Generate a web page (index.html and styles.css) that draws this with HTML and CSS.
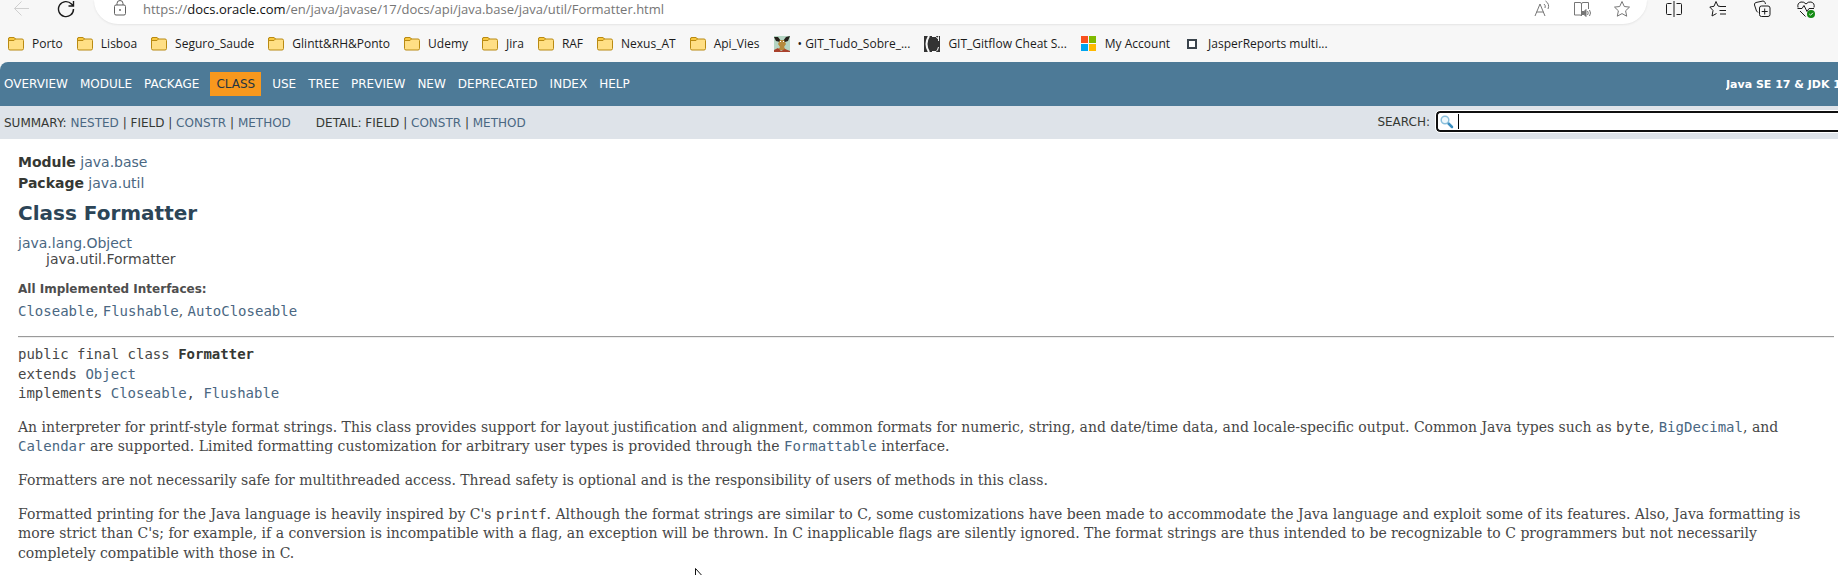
FILE: index.html
```html
<!DOCTYPE html>
<html lang="en">
<head>
<meta charset="utf-8">
<title>Formatter (Java SE 17 &amp; JDK 17)</title>
<link rel="stylesheet" href="styles.css">
</head>
<body>
<svg class="defs" aria-hidden="true">
  <symbol id="folder" viewBox="0 0 16 16">
    <path d="M.5 12.5V3q0-1.500 1.500-1.500h4L7.500 3H14q1.500 0 1.500 1.500v8q0 1.500-1.500 1.500H2q-1.500 0-1.500-1.500z" fill="#ffdf85" stroke="#b98a12"/>
    <path d="M.5 4.500V3q0-1.500 1.500-1.500h4L7.500 3 6 4.500z" fill="#f8c840" stroke="#b98a12"/>
  </symbol>
</svg>
<header class="browser">
  <div class="toolbar">
    <button class="tool back" aria-label="Back"><svg viewBox="0 0 18 18"><path d="M16 8.500H1.500M8.500 1.500l-7 7 7 7"/></svg></button>
    <button class="tool reload" aria-label="Refresh"><svg viewBox="0 0 18 18"><path d="M16.500 9A7.500 7.500 0 1 1 14.500 4L16 5.500M16.500 1v5h-5"/></svg></button>
    <div class="address">
      <svg class="lock" viewBox="0 0 14 16"><rect x="1.500" y="5" width="11" height="10" rx="1.500"/><path d="M4 5V3.500a3 3 0 0 1 6 0V5"/><circle cx="7" cy="10" r=".6"/></svg>
      <span class="url">https://<b>docs.oracle.com</b>/en/java/javase/17/docs/api/java.base/java/util/Formatter.html</span>
      <span class="page-tools">
        <button class="tool" aria-label="Read aloud"><svg viewBox="0 0 18 18"><path d="M2 16 7 4l5 12M3.500 12h7M11 4q2 1.500 1 4M12.500 1q4.500 3 2.500 8"/></svg></button>
        <button class="tool" aria-label="Immersive reader"><svg viewBox="0 0 18 18"><path d="M8.500 16V4Q8.500 2.500 7 2.500H1.500V15H7q1.500 0 1.500 1M8.500 4q0-1.500 1.500-1.500h5.500V9M14.500 11q1.500 2 0 4M16.500 10q2 3 0 6"/><path class="solid" d="M9 11.500h2l2-2v7l-2-2H9z"/></svg></button>
        <button class="tool" aria-label="Favorite"><svg viewBox="0 0 18 18"><path d="m9 1.500 2.300 5 5.200.6-3.900 3.700 1.100 5.400L9 13.600l-4.700 2.600 1.100-5.400L1.500 7.100l5.200-.6z"/></svg></button>
      </span>
    </div>
    <div class="side-tools">
      <button class="tool" aria-label="Split screen"><svg viewBox="0 0 18 18"><path d="M6.500 3.500h-4q-1 0-1 1v9q0 1 1 1h4M11.500 3.500h4q1 0 1 1v9q0 1-1 1h-4M9 1v16"/></svg></button>
      <button class="tool" aria-label="Favorites"><svg viewBox="0 0 18 18"><path d="M11.500 6.500 9 6 7 1.500 5 6.300.8 7l3.200 3.500-1 5.500 4.500-2.500M11 6.500h6M10.500 10.500H17M11 14h6"/></svg></button>
      <button class="tool" aria-label="Collections"><svg viewBox="0 0 18 18"><rect x="6.500" y="6" width="10.500" height="10.500" rx="2"/><path d="M11.700 8.500v6M8.700 11.500h6M5 12.500 3.500 11 1.500 5Q1 3 3 2.500l7-1.500q1.500 0 2 1.500l.5 1.500"/></svg></button>
      <button class="tool" aria-label="Browser essentials"><svg viewBox="0 0 18 18"><path d="M1 7.500Q0 3 4 2q3-.5 5 2 2-2.500 5-2 4 1 3 5.500M.5 8.500H5l2-3 3 6 2-3h5M3 11l5.500 5.500"/><circle cx="14" cy="14" r="4" fill="#138a13" stroke="none"/><path d="m12.300 14 1.200 1.200 2.400-2.400" stroke="#fff"/></svg></button>
    </div>
  </div>
  <nav class="bookmarks" aria-label="Bookmarks">
    <a href="#"><svg><use href="#folder"/></svg>Porto</a>
    <a href="#"><svg><use href="#folder"/></svg>Lisboa</a>
    <a href="#"><svg><use href="#folder"/></svg>Seguro_Saude</a>
    <a href="#"><svg><use href="#folder"/></svg>Glintt&amp;RH&amp;Ponto</a>
    <a href="#"><svg><use href="#folder"/></svg>Udemy</a>
    <a href="#"><svg><use href="#folder"/></svg>Jira</a>
    <a href="#"><svg><use href="#folder"/></svg>RAF</a>
    <a href="#"><svg><use href="#folder"/></svg>Nexus_AT</a>
    <a href="#"><svg><use href="#folder"/></svg>Api_Vies</a>
    <a href="#"><svg viewBox="0 0 16 16"><path fill="#b5d5c3" d="M0 0h16v16H0z"/><path fill="#26201a" d="m0 1 4 0 3 4h2l3-4 4-1-2 5-3 1H6L2 5z"/><path fill="#b68a3c" d="M6 4h4l2 4-2 3 2 3H4l2-3-2-3z"/><path fill="#a9412c" d="M0 14l4-2 3 3 4-2 5 2v1H0z"/><path fill="#fff" d="M6 5h1v1H6zM9 5h1v1H9z"/></svg>• GIT_Tudo_Sobre_...</a>
    <a href="#"><svg viewBox="0 0 16 16"><path fill="#333" d="M0 0h16v16H0z"/><path fill="none" stroke="#f7f7f7" stroke-width="2" d="M5 0Q0 8 5 16"/><path fill="none" stroke="#f7f7f7" d="M8 .5h4l1.500 2 1-2V5M14.500 11l-1 3-1.500 1.500H8"/></svg>GIT_Gitflow Cheat S...</a>
    <a href="#"><svg viewBox="0 0 16 16"><path fill="#f8501e" d="M0 0h7v7H0z"/><path fill="#7fba00" d="M8 0h7v7H8z"/><path fill="#00a4ef" d="M0 8h7v7H0z"/><path fill="#ffb900" d="M8 8h7v7H8z"/></svg>My Account</a>
    <a href="#"><svg viewBox="0 0 16 16"><path fill="#fff" stroke="#3b444c" stroke-width="2" d="M4 4h8v8H4z"/></svg>JasperReports multi...</a>
  </nav>
</header>
<div class="page">
  <nav class="top-nav" aria-label="Documentation">
    <ul>
      <li><a href="#">OVERVIEW</a></li>
      <li><a href="#">MODULE</a></li>
      <li><a href="#">PACKAGE</a></li>
      <li class="current">CLASS</li>
      <li><a href="#">USE</a></li>
      <li><a href="#">TREE</a></li>
      <li><a href="#">PREVIEW</a></li>
      <li><a href="#">NEW</a></li>
      <li><a href="#">DEPRECATED</a></li>
      <li><a href="#">INDEX</a></li>
      <li><a href="#">HELP</a></li>
    </ul>
    <div class="version">Java SE 17 &amp; JDK 17</div>
  </nav>
  <div class="sub-nav">
    <div class="members">
      <span>SUMMARY: <a href="#">NESTED</a> | FIELD | <a href="#">CONSTR</a> | <a href="#">METHOD</a></span>
      <span>DETAIL: FIELD | <a href="#">CONSTR</a> | <a href="#">METHOD</a></span>
    </div>
    <div class="search">
      <label for="search">SEARCH:</label>
      <div class="search-box">
        <input id="search" type="text">
        <svg viewBox="0 0 14 14"><path d="m7.500 7.500 4.500 4.500" stroke="#3a8ec0" stroke-width="2.500" stroke-linecap="round"/><circle cx="5" cy="5" r="3.800" fill="#eef8fc" stroke="#8abfdc" stroke-width="1.500"/></svg>
        <span class="caret"></span>
      </div>
    </div>
  </div>
  <main>
    <div class="owner"><b>Module</b> <a href="#">java.base</a></div>
    <div class="owner"><b>Package</b> <a href="#">java.util</a></div>
    <h1>Class Formatter</h1>
    <div class="inheritance"><a href="#">java.lang.Object</a>
      <div>java.util.Formatter</div>
    </div>
    <dl>
      <dt>All Implemented Interfaces:</dt>
      <dd><a href="#"><code>Closeable</code></a>, <a href="#"><code>Flushable</code></a>, <a href="#"><code>AutoCloseable</code></a></dd>
    </dl>
    <hr>
    <div class="signature">public final class <b>Formatter</b><br>extends <a href="#">Object</a><br>implements <a href="#">Closeable</a>, <a href="#">Flushable</a></div>
    <div class="description">
      <p>An interpreter for printf-style format strings. This class provides support for layout justification and alignment, common formats for numeric, string, and date/time data, and locale-specific output. Common Java types such as <code>byte</code>, <a href="#"><code>BigDecimal</code></a>, and <a href="#"><code>Calendar</code></a> are supported. Limited formatting customization for arbitrary user types is provided through the <a href="#"><code>Formattable</code></a> interface.</p>
      <p>Formatters are not necessarily safe for multithreaded access. Thread safety is optional and is the responsibility of users of methods in this class.</p>
      <p>Formatted printing for the Java language is heavily inspired by C's <code>printf</code>. Although the format strings are similar to C, some customizations have been made to accommodate the Java language and exploit some of its features. Also, Java formatting is more strict than C's; for example, if a conversion is incompatible with a flag, an exception will be thrown. In C inapplicable flags are silently ignored. The format strings are thus intended to be recognizable to C programmers but not necessarily completely compatible with those in C.</p>
    </div>
  </main>
</div>
<svg class="pointer" viewBox="0 0 12 18" aria-hidden="true"><path d="M.5.5v15l4-4h6z" fill="#fff" stroke="#111"/></svg>
</body>
</html>
```

FILE: styles.css
```css
* { box-sizing: border-box; }

body {
  display: flex;
  flex-direction: column;
  margin: 0;
  height: 100vh;
  overflow: hidden;
  position: relative;
  background: #f7f7f7;
  color: #353833;
  font: 14px "DejaVu Sans", sans-serif;
}

a { color: #4a6782; text-decoration: none; }
code, .signature { font-family: "DejaVu Sans Mono", monospace; font-size: 14px; }
.defs { position: absolute; width: 0; height: 0; }

/* Browser chrome */
.browser { flex: none; font-family: "Open Sans", sans-serif; }
.toolbar { display: flex; height: 24px; }
.tool {
  flex: none;
  width: 18px;
  height: 18px;
  padding: 0;
  border: 0;
  background: none;
  color: #1b1b1b;
}
.tool svg { display: block; width: 18px; height: 18px; fill: none; stroke: currentColor; }
.tool .solid { fill: currentColor; }
.back { margin-left: 13px; color: #cfcfcf; }
.reload { margin-left: 26px; }
.reload svg { stroke-width: 1.4; }
.address {
  flex: 1;
  display: flex;
  margin-left: 19px;
  padding: 0 16px 0 19px;
  background: #fff;
  border-radius: 0 0 24px 24px;
  box-shadow: 0 1px 2px #e4e4e4;
}
.lock { width: 14px; height: 16px; fill: none; stroke: #5f5f5f; }
.url { margin-left: 16px; color: #767676; font-size: 13px; line-height: 18px; white-space: nowrap; }
.url b { color: #111; font-weight: 400; }
.page-tools { display: flex; gap: 22px; margin-left: auto; }
.page-tools .tool { color: #767676; }
.side-tools { display: flex; gap: 26px; margin: 0 23px 0 18px; }

.bookmarks { display: flex; gap: 14px; height: 38px; padding: 2px 8px 0; align-items: center; }
.bookmarks a {
  display: flex;
  align-items: center;
  gap: 8px;
  color: #1b1b1b;
  font-size: 12px;
  line-height: 16px;
  white-space: nowrap;
}
.bookmarks svg { flex: none; width: 16px; height: 16px; }

/* Documentation header */
.page { flex: 1; min-height: 0; background: #fff; border-radius: 8px 0 0 0; overflow: hidden; }
.top-nav {
  display: flex;
  justify-content: space-between;
  align-items: center;
  height: 44px;
  padding-left: 4px;
  background: #4d7a97;
  color: #fff;
  font-size: 12px;
}
.top-nav ul { display: flex; align-items: center; gap: 12px; margin: 0; padding: 0; list-style: none; }
.top-nav a { color: #fff; }
.top-nav .current { margin: 0 -1px; padding: 5px 6px; background: #f8981d; color: #253441; }
.version { width: 112px; overflow: hidden; font-size: 11px; font-weight: 700; white-space: nowrap; }

.sub-nav {
  display: flex;
  justify-content: space-between;
  align-items: center;
  height: 33px;
  padding-left: 4px;
  background: #dee3e9;
  font-size: 12px;
}
.members { display: flex; gap: 25px; }
.search { display: flex; align-items: center; gap: 6px; margin-top: -2px; }
.search-box { position: relative; width: 402px; }
.search input {
  display: block;
  width: 100%;
  height: 21px;
  padding: 0 0 0 20px;
  border: 2px solid #101010;
  border-right: 0;
  border-radius: 4px 0 0 4px;
  outline: 1px solid #fff;
  background: #fff;
  font: 13px "DejaVu Sans", sans-serif;
}
.search svg { position: absolute; left: 4px; top: 4px; width: 14px; height: 14px; fill: none; }
.caret { position: absolute; left: 22px; top: 3px; width: 1px; height: 15px; background: #000; }

/* Class page */
main { padding: 13px 4px 0 18px; color: #474747; }
main b { color: #353833; }
.owner { line-height: 21px; }
h1 { margin: 7px 0 10px; color: #2c4557; font-size: 20px; line-height: 24px; }
.inheritance { line-height: 16px; }
.inheritance div { padding-left: 28px; }
dl { margin: 15px 0; color: #4e4e4e; }
dt { font-size: 12px; font-weight: 700; line-height: 14px; }
dd { margin: 5px 0 0; font-family: "DejaVu Serif", serif; line-height: 20px; }
hr { height: 2px; margin: 0 0 7px; border: 0; border-top: 1px solid #9a9a9a; border-bottom: 1px solid #eee; }
.signature { line-height: 1.4; }
.description { font-family: "DejaVu Serif", serif; line-height: 1.4; }
.description p { margin: 14px 0; }

.pointer { position: absolute; left: 695px; top: 568px; width: 12px; height: 18px; }
```
